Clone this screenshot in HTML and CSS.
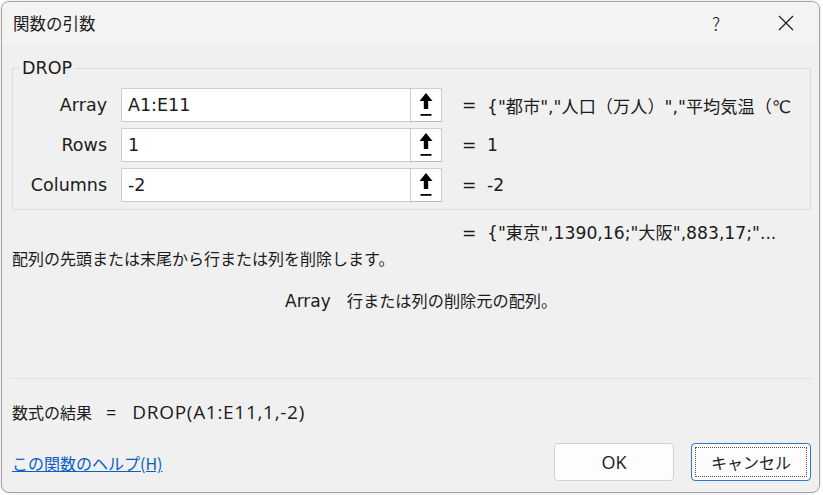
FILE: index.html
```html
<!DOCTYPE html>
<html lang="ja">
<head>
    <meta charset="UTF-8">
    <meta name="viewport" content="width=device-width, initial-scale=1.0">
    <title>関数の引数</title>
    <link rel="stylesheet" href="styles.css">
</head>
<body>

<div class="dialog">
    <div class="titlebar">
        <span class="title">関数の引数</span>
        <span class="tb-btn help">?</span>
        <span class="tb-btn close">
            <svg width="16" height="16" viewBox="0 0 16 16">
                <path d="M1 1 L15 15 M15 1 L1 15" stroke="#1b1b1b" stroke-width="1.2" fill="none"/>
            </svg>
        </span>
    </div>

    <div class="content">
        <fieldset class="args">
            <legend>DROP</legend>

            <div class="arg-row">
                <label class="arg-name">Array</label>
                <div class="arg-input">A1:E11</div>
                <button class="ref-btn">
                    <svg width="14" height="24" viewBox="0 0 14 24">
                        <polygon points="7,0 0.5,8 4.8,8 4.8,16 9.2,16 9.2,8 13.5,8" fill="#000"/>
                        <rect x="1.5" y="21" width="11" height="1.8" fill="#000"/>
                    </svg>
                </button>
                <div class="arg-value"><span class="eq">=</span><span class="val">{"都市","人口（万人）","平均気温（℃</span></div>
            </div>

            <div class="arg-row">
                <label class="arg-name">Rows</label>
                <div class="arg-input">1</div>
                <button class="ref-btn">
                    <svg width="14" height="24" viewBox="0 0 14 24">
                        <polygon points="7,0 0.5,8 4.8,8 4.8,16 9.2,16 9.2,8 13.5,8" fill="#000"/>
                        <rect x="1.5" y="21" width="11" height="1.8" fill="#000"/>
                    </svg>
                </button>
                <div class="arg-value"><span class="eq">=</span><span class="val">1</span></div>
            </div>

            <div class="arg-row">
                <label class="arg-name">Columns</label>
                <div class="arg-input">-2</div>
                <button class="ref-btn">
                    <svg width="14" height="24" viewBox="0 0 14 24">
                        <polygon points="7,0 0.5,8 4.8,8 4.8,16 9.2,16 9.2,8 13.5,8" fill="#000"/>
                        <rect x="1.5" y="21" width="11" height="1.8" fill="#000"/>
                    </svg>
                </button>
                <div class="arg-value"><span class="eq">=</span><span class="val">-2</span></div>
            </div>
        </fieldset>

        <div class="result-row"><span class="eq">=</span><span class="val">{"東京",1390,16;"大阪",883,17;"...</span></div>

        <p class="desc">配列の先頭または末尾から行または列を削除します。</p>
        <p class="arg-desc"><span class="arg-desc-name">Array</span>行または列の削除元の配列。</p>

        <hr class="sep">

        <div class="formula">数式の結果<span class="formula-eq">=</span><span class="formula-text">DROP(A1:E11,1,-2)</span></div>

        <div class="footer">
            <a class="help-link" href="#">この関数のヘルプ(H)</a>
            <button class="btn ok">OK</button>
            <button class="btn cancel">キャンセル</button>
        </div>
    </div>
</div>

</body>
</html>
```

FILE: styles.css
```css
html, body {
    margin: 0;
    background-color: #ffffff;
}

body {
    font-family: "DejaVu Sans", "Noto Sans CJK JP", sans-serif;
    font-size: 16px;
    color: #1b1b1b;
    width: 823px;
    height: 495px;
    overflow: hidden;
}

.dialog {
    margin: 1px 0 0 1px;
    width: 819px;
    height: 492px;
    box-sizing: border-box;
    border: 1px solid #a3a3a3;
    border-radius: 8px;
    background-color: #f0f0f0;
    overflow: hidden;
    box-shadow: 0 0 3px rgba(0, 0, 0, 0.15);
}

/* title bar */
.titlebar {
    height: 42px;
    display: flex;
    align-items: center;
    padding-left: 11px;
    background-color: #f3f3f3;
    font-family: "Noto Sans CJK JP", sans-serif;
}

.title {
    font-size: 16.5px;
    flex: 1;
}

.tb-btn {
    display: flex;
    justify-content: center;
    align-items: center;
    height: 42px;
}

.help {
    width: 74px;
    font-size: 18px;
    font-weight: 300;
}

.close {
    width: 66px;
}

/* content */
.content {
    padding: 13px 8px 0 10px;
}

.args {
    margin: 0;
    width: 799px;
    box-sizing: border-box;
    border: 1px solid #dcdcdc;
    padding: 9px 0 7px 0;
}

.args legend {
    margin-left: 7px;
    padding: 0 2px;
    font-size: 17.5px;
    line-height: 22px;
}

.arg-row {
    display: grid;
    grid-template-columns: 108px 289px 32px 1fr;
    height: 34px;
    margin-bottom: 6px;
}

.arg-row:last-child {
    margin-bottom: 0;
}

.arg-name {
    font-size: 17.5px;
    text-align: right;
    padding-right: 14px;
    align-self: center;
}

.arg-input {
    background-color: #ffffff;
    border: 1px solid #cdcdcd;
    border-right: none;
    font-size: 17.5px;
    line-height: 32px;
    padding-left: 6px;
}

.ref-btn {
    background-color: #ffffff;
    border: 1px solid #cdcdcd;
    border-bottom-color: #b9b9b9;
    padding: 0;
    display: flex;
    justify-content: center;
    align-items: center;
}

.arg-value {
    display: flex;
    align-items: center;
    padding-left: 20px;
    white-space: nowrap;
    overflow: hidden;
    font-size: 17.2px;
}

.eq {
    width: 25px;
    flex: none;
}

.result-row {
    display: flex;
    margin-top: 12px;
    padding-left: 450px;
    line-height: 22px;
    font-size: 17.2px;
    white-space: nowrap;
}

.desc {
    margin: 5px 0 0 0;
    line-height: 22px;
    font-size: 16px;
}

.arg-desc {
    margin: 19px 0 0 0;
    padding-left: 273px;
    line-height: 22px;
    font-size: 16.2px;
}

.arg-desc-name {
    font-size: 17px;
    margin-right: 16px;
}

.sep {
    margin: 65px 0 0 -2px;
    border: none;
    border-top: 1px solid #e2e2e2;
    width: 802px;
}

.formula {
    margin-top: 22px;
    line-height: 22px;
    font-family: "Noto Sans CJK JP", sans-serif;
    font-size: 16px;
}

.formula-eq {
    font-family: "Open Sans", sans-serif;
    font-size: 18px;
    margin-left: 14px;
}

.formula-text {
    font-family: "Open Sans", sans-serif;
    font-size: 19px;
    letter-spacing: 0.7px;
    margin-left: 16px;
}

.footer {
    display: flex;
    align-items: center;
    margin-top: 20px;
    height: 38px;
    font-family: "Noto Sans CJK JP", sans-serif;
}

.help-link {
    color: #0a5fc4;
    font-size: 16px;
    text-decoration: underline;
    margin-right: auto;
    margin-top: 2px;
}

.btn {
    width: 120px;
    height: 38px;
    background-color: #fdfdfd;
    border: 1px solid #d3d3d3;
    border-radius: 4px;
    font-family: "Noto Sans CJK JP", sans-serif;
    font-size: 16px;
    color: #1b1b1b;
}

.ok {
    font-family: "Open Sans", sans-serif;
    font-size: 18px;
    margin-right: 17px;
}

.cancel {
    border-color: #2b77cf;
    outline: 1px dotted #555555;
    outline-offset: -5px;
}
```
